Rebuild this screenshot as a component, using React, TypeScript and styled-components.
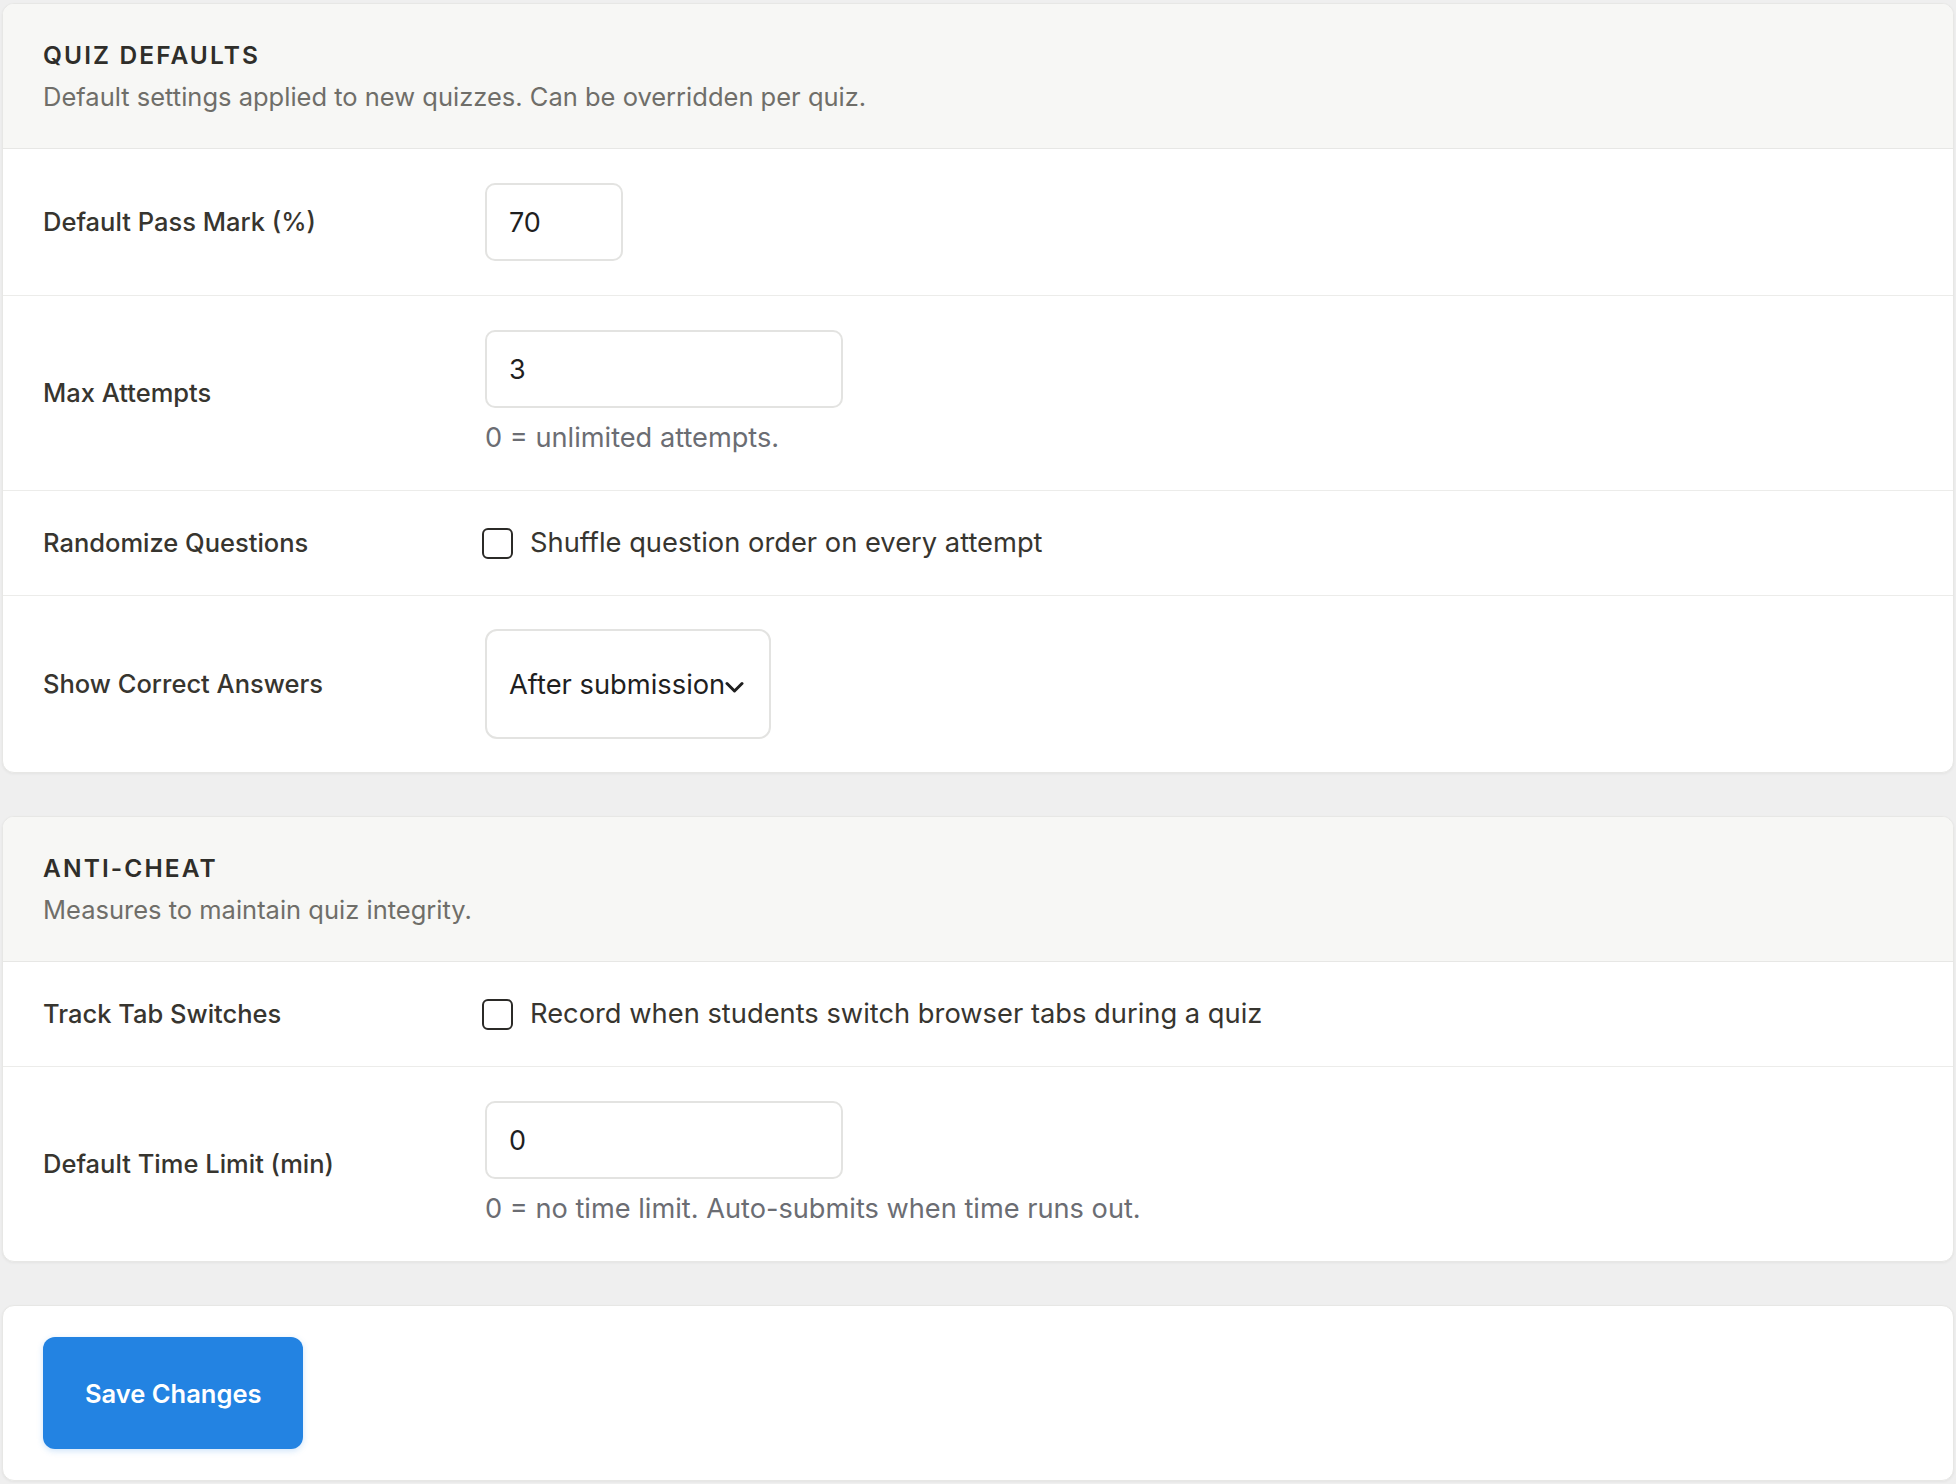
import * as React from "react";
import styled, { createGlobalStyle } from "styled-components";

const GlobalStyle = createGlobalStyle`
  html, body {
    margin: 0;
    padding: 0;
    background: #efefef;
  }
  body {
    font-family: Inter, "Noto Sans", "Liberation Sans", sans-serif;
    color: #37352f;
  }
  * {
    box-sizing: border-box;
  }
`;

const Page = styled.div`
  display: flex;
  flex-direction: column;
  gap: 43px;
  padding: 3px 2px 2px 2px;
`;

const Card = styled.section`
  background: #ffffff;
  border: 1px solid #e7e7e5;
  border-radius: 12px;
  box-shadow: 0 1px 3px rgba(0, 0, 0, 0.05);
  overflow: hidden;
`;

const CardHeader = styled.header`
  background: #f7f7f5;
  padding: 36px 40px 34px;
  border-bottom: 1px solid #e7e7e5;
`;

const Title = styled.h2`
  margin: 0;
  font-size: 24.5px;
  line-height: 30px;
  font-weight: 600;
  letter-spacing: 2.1px;
  text-transform: uppercase;
  color: #2f2e2a;
`;

const Subtitle = styled.p`
  margin: 10px 0 0;
  font-size: 25.5px;
  line-height: 34px;
  color: #6f6e69;
`;

const Row = styled.div<{ $pad?: number }>`
  display: grid;
  grid-template-columns: 442px 1fr;
  align-items: center;
  padding: ${(p) => p.$pad ?? 34}px 40px;
  & + & {
    border-top: 1px solid #ececea;
  }
`;

const Label = styled.label`
  font-size: 25.5px;
  font-weight: 500;
  line-height: 34px;
  color: #37352f;
`;

const Field = styled.div`
  display: flex;
  flex-direction: column;
  align-items: flex-start;
`;

const TextInput = styled.input<{ $width: number }>`
  width: ${(p) => p.$width}px;
  height: 78px;
  padding: 0 22px;
  border: 2px solid #e3e3e1;
  border-radius: 10px;
  background: #fff;
  font-family: inherit;
  font-size: 27px;
  color: #1f1f1f;
  outline: none;
`;

const Hint = styled.p`
  margin: 12px 0 0;
  font-size: 27.2px;
  line-height: 36px;
  color: #6b6d73;
`;

const CheckLine = styled.label`
  display: flex;
  align-items: center;
  gap: 17px;
  margin-left: -3px;
  font-size: 27.3px;
  line-height: 36px;
  color: #37352f;
`;

const Box = styled.span`
  width: 31px;
  height: 31px;
  border: 2px solid #2b2a27;
  border-radius: 6px;
  background: #fff;
  flex-shrink: 0;
`;

const Select = styled.div`
  display: flex;
  align-items: center;
  width: 286px;
  height: 110px;
  padding: 0 22px;
  border: 2px solid #e3e3e1;
  border-radius: 12px;
  background: #fff;
  font-size: 27.3px;
  color: #1f1f1f;
`;

const Chevron = styled.svg`
  width: 19px;
  height: 13px;
  margin-top: 6px;
  flex-shrink: 0;
`;

const Footer = styled.div`
  padding: 31px 40px;
`;

const SaveButton = styled.button`
  height: 112px;
  padding: 0 42px;
  border: none;
  border-radius: 12px;
  background: #2383e2;
  color: #fff;
  font-family: inherit;
  font-size: 25.5px;
  font-weight: 600;
  box-shadow: 0 2px 6px rgba(35, 131, 226, 0.22);
  cursor: pointer;
`;

const Checkbox = ({ text }: { text: string }) => (
  <CheckLine>
    <Box />
    {text}
  </CheckLine>
);

export default function App() {
  return (
    <Page>
      <GlobalStyle />
      <Card>
        <CardHeader>
          <Title>Quiz Defaults</Title>
          <Subtitle>Default settings applied to new quizzes. Can be overridden per quiz.</Subtitle>
        </CardHeader>
        <Row>
          <Label>Default Pass Mark (%)</Label>
          <Field>
            <TextInput $width={138} defaultValue="70" />
          </Field>
        </Row>
        <Row>
          <Label>Max Attempts</Label>
          <Field>
            <TextInput $width={358} defaultValue="3" />
            <Hint>0 = unlimited attempts.</Hint>
          </Field>
        </Row>
        <Row>
          <Label>Randomize Questions</Label>
          <Checkbox text="Shuffle question order on every attempt" />
        </Row>
        <Row $pad={33}>
          <Label>Show Correct Answers</Label>
          <Field>
            <Select>
              After submission
              <Chevron viewBox="0 0 19 13">
                <path d="M2 2.5l7.5 7.5 7.5-7.5" fill="none" stroke="#1f1f1f" strokeWidth="3" strokeLinecap="round" strokeLinejoin="round" />
              </Chevron>
            </Select>
          </Field>
        </Row>
      </Card>

      <Card>
        <CardHeader>
          <Title>Anti-Cheat</Title>
          <Subtitle>Measures to maintain quiz integrity.</Subtitle>
        </CardHeader>
        <Row>
          <Label>Track Tab Switches</Label>
          <Checkbox text="Record when students switch browser tabs during a quiz" />
        </Row>
        <Row>
          <Label>Default Time Limit (min)</Label>
          <Field>
            <TextInput $width={358} defaultValue="0" />
            <Hint>0 = no time limit. Auto-submits when time runs out.</Hint>
          </Field>
        </Row>
      </Card>

      <Card>
        <Footer>
          <SaveButton>Save Changes</SaveButton>
        </Footer>
      </Card>
    </Page>
  );
}
